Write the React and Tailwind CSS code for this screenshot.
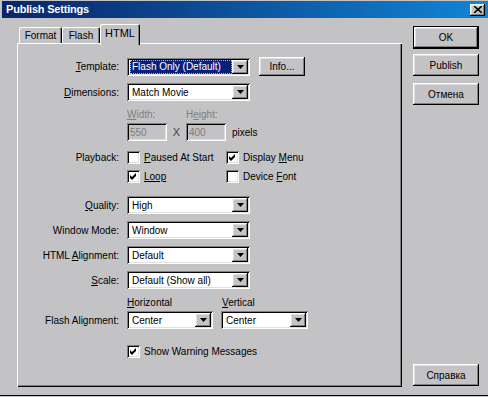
import React from 'react';

const raised = 'shadow-[inset_-1px_-1px_0_#000,inset_1px_1px_0_#fff,inset_-2px_-2px_0_#808080,inset_2px_2px_0_#dfdfdf]';
const sunken = 'shadow-[inset_1px_1px_0_#808080,inset_-1px_-1px_0_#fff,inset_2px_2px_0_#000,inset_-2px_-2px_0_#dfdfdf]';

function U({ children }) {
  return <span className="underline underline-offset-[1px]">{children}</span>;
}

function Arrow() {
  return (
    <svg width="7" height="4" viewBox="0 0 7 4">
      <polygon points="0,0 7,0 3.5,4" fill="#000" />
    </svg>
  );
}

function Select({ value, className, active }) {
  return (
    <div className={`flex h-[18px] bg-white p-[2px] ${sunken} ${className}`}>
      <div className="flex-1 min-w-0 flex items-center pl-[1px]">
        {active ? (
          <span className="w-full h-full flex items-center pl-[2px] bg-[#0a1f7a] text-white outline-1 outline-dotted outline-[#c8c060] -outline-offset-1">
            {value}
          </span>
        ) : (
          <span className="pl-[2px] whitespace-nowrap">{value}</span>
        )}
      </div>
      <div className={`w-[16px] h-[14px] flex items-center justify-center bg-[#c3c3c6] ${raised}`}>
        <Arrow />
      </div>
    </div>
  );
}

function Check({ checked, label }) {
  return (
    <div className="flex items-center h-[13px]">
      <div className={`w-[13px] h-[13px] bg-white flex items-center justify-center ${sunken}`}>
        {checked && (
          <svg width="13" height="13" viewBox="0 0 13 13">
            <path d="M3 5 L5 7 L9 3 L9 6 L5 10 L3 8 Z" fill="#000" />
          </svg>
        )}
      </div>
      <span className="ml-[4px] whitespace-nowrap">{label}</span>
    </div>
  );
}

function Label({ children }) {
  return <div className="w-[102px] text-right whitespace-nowrap">{children}</div>;
}

function Button({ children, def, className = '' }) {
  return (
    <div className={`flex items-center justify-center bg-[#c3c3c6] ${def ? 'border border-black' : ''} ${className}`}>
      <div className={`w-full h-full flex items-center justify-center ${raised}`}>{children}</div>
    </div>
  );
}

export default function App() {
  return (
    <div className="w-[488px] h-[397px] bg-[#c3c3c6] font-['Liberation_Sans',Arial,sans-serif] text-[10px] text-black leading-[13px] select-none">
      <div className="h-[396px] border-b border-black flex flex-col">
        {/* title bar */}
        <div className="mt-[1px] ml-[2px] h-[17px] flex items-center justify-between bg-linear-to-r from-[#0a246a] to-[#1286d4] pr-[3px]">
          <span className="pl-[4px] text-white font-bold text-[11px] tracking-[-0.2px]">Publish Settings</span>
          <div className={`w-[15px] h-[12px] bg-[#c3c3c6] flex items-center justify-center ${raised}`}>
            <svg width="8" height="7" viewBox="0 0 8 7">
              <path d="M0 0 L8 7 M8 0 L0 7" stroke="#000" strokeWidth="1.6" />
            </svg>
          </div>
        </div>

        {/* body */}
        <div className="flex-1 flex pl-[17px]">
          <div className="w-[385px] pt-[6px] flex flex-col">
            {/* tabs */}
            <div className="h-[19px] flex items-end pl-[2px]">
              <div className="w-[43px] h-[16px] flex items-center justify-center rounded-t-[2px] shadow-[inset_1px_1px_0_#fff,inset_-1px_0_0_#000,inset_-2px_0_0_#808080]">
                Format
              </div>
              <div className="w-[38px] h-[16px] flex items-center justify-center rounded-t-[2px] shadow-[inset_1px_1px_0_#fff,inset_-1px_0_0_#000,inset_-2px_0_0_#808080]">
                Flash
              </div>
              <div className="relative z-10 w-[40px] h-[21px] -mb-[2px] pb-[3px] bg-[#c3c3c6] flex items-center justify-center rounded-t-[2px] text-[11px] shadow-[inset_1px_1px_0_#fff,inset_-1px_0_0_#000,inset_-2px_0_0_#808080]">
                HTML
              </div>
            </div>

            {/* panel */}
            <div className="h-[344px] flex flex-col shadow-[inset_1px_1px_0_#fff,inset_-1px_-1px_0_#000,inset_-2px_-2px_0_#808080]">
              <div className="mt-[14px] flex items-center">
                <Label><U>T</U>emplate:</Label>
                <Select value="Flash Only (Default)" active className="ml-[8px] w-[123px]" />
                <Button className="ml-[9px] w-[46px] h-[19px]">Info...</Button>
              </div>

              <div className="mt-[7px] flex items-center">
                <Label><U>D</U>imensions:</Label>
                <Select value="Match Movie" className="ml-[8px] w-[123px]" />
              </div>

              <div className="mt-[6px] h-[14px] flex items-center ml-[110px] text-[#808080]">
                <div className="w-[59px]"><U>W</U>idth:</div>
                <div>H<U>e</U>ight:</div>
              </div>

              <div className="mt-[2px] flex items-center ml-[110px]">
                <div className={`w-[40px] h-[18px] flex items-center pl-[3px] text-[#808080] ${sunken}`}>550</div>
                <div className="w-[19px] text-center text-[11px] text-[#404040]">X</div>
                <div className={`w-[40px] h-[18px] flex items-center pl-[3px] text-[#808080] ${sunken}`}>400</div>
                <div className="ml-[6px]">pixels</div>
              </div>

              <div className="mt-[10px] flex items-center">
                <Label>Playback:</Label>
                <div className="ml-[8px] w-[99px]">
                  <Check label={<><U>P</U>aused At Start</>} />
                </div>
                <Check checked label={<>Display <U>M</U>enu</>} />
              </div>

              <div className="mt-[6px] flex items-center ml-[110px]">
                <div className="w-[99px]">
                  <Check checked label={<U>Loop</U>} />
                </div>
                <Check label={<>Device <U>F</U>ont</>} />
              </div>

              <div className="mt-[13px] flex items-center">
                <Label><U>Q</U>uality:</Label>
                <Select value="High" className="ml-[8px] w-[123px]" />
              </div>

              <div className="mt-[7px] flex items-center">
                <Label>Window Mode:</Label>
                <Select value="Window" className="ml-[8px] w-[123px]" />
              </div>

              <div className="mt-[7px] flex items-center">
                <Label>HTML <U>A</U>lignment:</Label>
                <Select value="Default" className="ml-[8px] w-[123px]" />
              </div>

              <div className="mt-[7px] flex items-center">
                <Label><U>S</U>cale:</Label>
                <Select value="Default (Show all)" className="ml-[8px] w-[123px]" />
              </div>

              <div className="mt-[6px] h-[14px] flex items-center ml-[110px]">
                <div className="w-[95px]"><U>H</U>orizontal</div>
                <div><U>V</U>ertical</div>
              </div>

              <div className="mt-[2px] flex items-center">
                <Label>Flash Alignment:</Label>
                <Select value="Center" className="ml-[8px] w-[86px]" />
                <Select value="Center" className="ml-[8px] w-[87px]" />
              </div>

              <div className="mt-[16px] ml-[110px]">
                <Check checked label="Show Warning Messages" />
              </div>
            </div>
          </div>

          {/* buttons */}
          <div className="ml-[11px] w-[66px] pt-[8px] pb-[9px] flex flex-col">
            <Button def className="h-[23px]">OK</Button>
            <Button className="mt-[5px] h-[22px]">Publish</Button>
            <Button className="mt-[7px] h-[22px]">Отмена</Button>
            <Button className="mt-auto h-[22px]">Справка</Button>
          </div>
        </div>
      </div>
    </div>
  );
}
